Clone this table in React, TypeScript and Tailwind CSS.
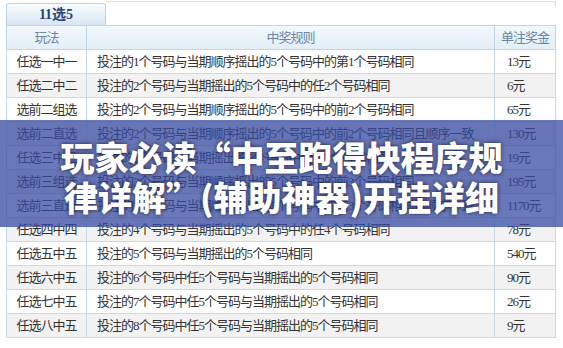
import React from "react";

const rows: [string, string, string][] = [
  ["任选一中一", "投注的1个号码与当期顺序摇出的5个号码中的第1个号码相同", "13元"],
  ["任选二中二", "投注的2个号码与当期摇出的5个号码中的任2个号码相同", "6元"],
  ["选前二组选", "投注的2个号码与当期顺序摇出的5个号码中的前2个号码相同", "65元"],
  ["选前二直选", "投注的2个号码与当期顺序摇出的5个号码中的前2个号码相同且顺序一致", "130元"],
  ["任选三中三", "投注的3个号码与当期摇出的5个号码中的任3个号码相同", "19元"],
  ["选前三组选", "投注的3个号码与当期顺序摇出的5个号码中的前3个号码相同", "195元"],
  ["选前三直选", "投注的3个号码与当期顺序摇出的5个号码中的前3个号码相同且顺序一致", "1170元"],
  ["任选四中四", "投注的4个号码与当期摇出的5个号码中的任4个号码相同", "78元"],
  ["任选五中五", "投注的5个号码与当期摇出的5个号码相同", "540元"],
  ["任选六中五", "投注的6个号码中任5个号码与当期摇出的5个号码相同", "90元"],
  ["任选七中五", "投注的7个号码中任5个号码与当期摇出的5个号码相同", "26元"],
  ["任选八中五", "投注的8个号码中任5个号码与当期摇出的5个号码相同", "9元"],
];

export default function App() {
  return (
    <div
      className="relative w-[563px] h-[348px] bg-white overflow-hidden"
      style={{ fontFamily: '"Liberation Serif", "Noto Sans CJK SC", serif' }}
    >
      <div className="flex pl-[6px] pt-[1px]">
        <div className="mt-[2px] w-[100px] h-[22px] flex items-center justify-center rounded-t-[3px] border border-b-0 border-[#b9d2e5] bg-gradient-to-b from-[#fbfdfe] to-[#d6e6f3] text-[14px] font-semibold text-[#24457a]">
          11选5
        </div>
        <div className="w-[450px] h-[6px] border-t border-r border-[#cfe0ec] rounded-tr-[3px]" />
      </div>
      <table className="ml-[6px] w-[549px] table-fixed border-collapse text-[13px] tracking-[-1px] text-[#333]">
        <colgroup>
          <col className="w-[80px]" />
          <col className="w-[408px]" />
          <col className="w-[61px]" />
        </colgroup>
        <thead>
          <tr className="h-[24px] bg-gradient-to-b from-[#f2f8fc] to-[#e3eef7] text-[#6a86a6]">
            <th className="border border-[#bdd5e6] font-normal text-center p-0">玩法</th>
            <th className="border border-[#bdd5e6] font-normal text-center p-0">中奖规则</th>
            <th className="border border-[#bdd5e6] font-normal text-center p-0">单注奖金</th>
          </tr>
        </thead>
        <tbody>
          {rows.map((r, i) => (
            <tr key={i} className={`h-[24px] ${i % 2 === 1 ? "bg-[#f2f2f2]" : "bg-white"}`}>
              <td className="border border-[#c5dae9] text-center p-0 whitespace-nowrap">{r[0]}</td>
              <td className="border border-[#c5dae9] pl-[10px] p-0 whitespace-nowrap">{r[1]}</td>
              <td className="border border-[#c5dae9] pl-[12px] p-0 whitespace-nowrap">{r[2]}</td>
            </tr>
          ))}
        </tbody>
      </table>
      <div className="absolute left-0 right-0 top-[120px] h-[107px] bg-[rgba(55,75,160,0.75)] flex items-center justify-center">
        <div
          className="pt-[6px] text-white text-center text-[34px] leading-[40px] font-black whitespace-nowrap [text-shadow:0_0_4px_rgba(20,20,50,0.85)]"
          style={{ fontFamily: '"Noto Sans CJK SC", "Noto Sans", sans-serif' }}
        >
          <div>玩家必读“中至跑得快程序规</div>
          <div>律详解”(辅助神器)开挂详细</div>
        </div>
      </div>
    </div>
  );
}
